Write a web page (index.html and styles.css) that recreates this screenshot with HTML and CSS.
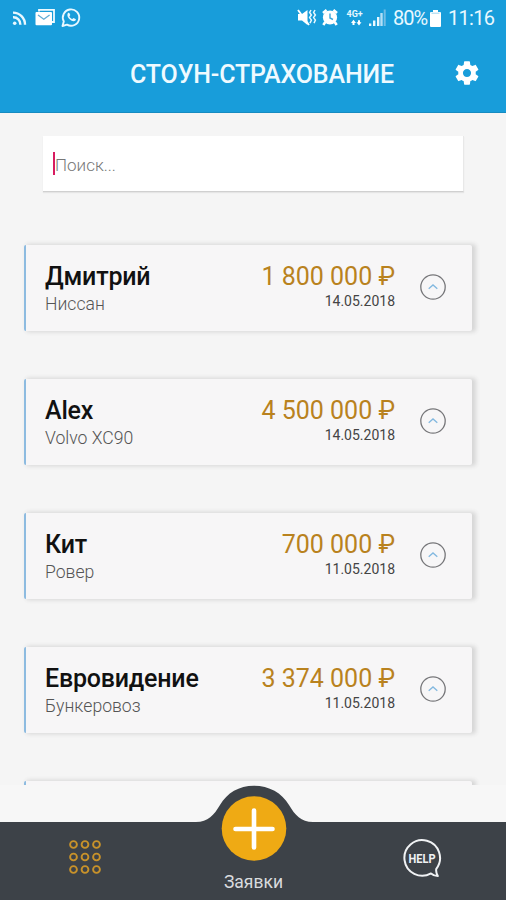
FILE: index.html
```html
<!DOCTYPE html>
<html lang="ru">
<head>
<meta charset="utf-8">
<title>Стоун-Страхование</title>
<link rel="stylesheet" href="styles.css">
</head>
<body>
<header class="header">
  <div class="status">
    <svg class="status-left" width="90" height="36" viewBox="0 0 90 36" fill="none">
      <g stroke="#e8f8ff" stroke-width="2.4">
        <circle cx="14.7" cy="23.3" r="1.8" fill="#e8f8ff" stroke="none"/>
        <path d="M13 17.3a7 7 0 0 1 7.4 7.4M13 12.6a12 12 0 0 1 12 12.1"/>
      </g>
      <path d="M39 11.5V9.8h15V22h-2.5" stroke="#eefaff" stroke-width="1.8"/>
      <rect x="35.5" y="12" width="16.5" height="13.2" rx="1" fill="#fff"/>
      <path d="M38 15l5.8 4.3 5.8-4.3" stroke="#5facd5" stroke-width="1.3"/>
      <path d="M62.5 26l1.3-4.6A8.2 8.2 0 1 1 67 24.7z" stroke="#e8f8ff" stroke-width="1.9" stroke-linejoin="round"/>
      <path d="M67.8 13.2c.6-.7 1.4-.6 1.7.1l.8 1.8-.9 1.3c.7 1.3 1.6 2.1 2.9 2.7l1.2-1.2 2 1c.6.3.5 1.2-.1 1.7-2.8 2.4-9.8-3.3-7.6-7.4z" fill="#e8f8ff"/>
    </svg>
    <div class="status-right">
      <svg width="92" height="36" viewBox="296 0 92 36" fill="none">
        <path d="M298 14h4l5.5-4v15l-5.5-4.4h-4z" fill="#fff"/>
        <path d="M298 10l11 15" stroke="#fff" stroke-width="1.9"/>
        <path d="M311 10l-1.4 2.5 1.8 2.5-1.8 2.6 1.8 2.5-1.4 3M315 10l-1.4 2.5 1.8 2.5-1.8 2.6 1.8 2.5-1.4 3" stroke="#e8f8ff" stroke-width="1.5"/>
        <circle cx="330" cy="17.5" r="7.1" fill="#fff"/>
        <path d="M323 13l3.6-3M337 13l-3.6-3M325.3 22l-2 3M334.7 22l2 3" stroke="#fff" stroke-width="2.6"/>
        <path d="M330 13.5V18l3 1.5" stroke="#3ba7dc" stroke-width="1.4"/>
        <text x="346.5" y="17" class="network">4G+</text>
        <path d="M353.5 19.8l2.5 3.2h-1.5v2h-2v-2H351zM359 25.5l-2.5-3.2h1.5v-2h2v2h1.5z" fill="#fff"/>
        <path d="M369 23.5h2.3V26H369zM373 20.5h2.4V26H373zM377 17h2.4v9H377z" fill="#e8f8ff"/>
        <path d="M380.3 13h2.4v13h-2.4z" fill="#b4dff5"/>
        <path d="M383.7 9.5h2V26h-2z" fill="#70bde5"/>
      </svg>
      <span class="percent">80%</span>
      <svg class="battery" width="11" height="17" viewBox="0 0 11 17"><path d="M3 0h5v2h2q1 0 1 1v13q0 1-1 1H1q-1 0-1-1V3q0-1 1-1h2z" fill="#fff"/><path d="M1.5 3.2h8" stroke="#a0d4ee"/></svg>
      <span class="clock">11:16</span>
    </div>
  </div>
  <div class="toolbar">
    <h1 class="title">СТОУН-СТРАХОВАНИЕ</h1>
    <svg class="gear" width="28" height="28" viewBox="0 0 24 24" fill="#fff"><path d="M19.43 12.98c.04-.32.07-.64.07-.98s-.03-.66-.07-.98l2.11-1.65c.19-.15.24-.42.12-.64l-2-3.46c-.12-.22-.39-.3-.61-.22l-2.49 1c-.52-.4-1.08-.73-1.69-.98l-.38-2.65A.488.488 0 0 0 14 2h-4c-.25 0-.46.18-.49.42l-.38 2.65c-.61.25-1.17.59-1.69.98l-2.49-1c-.23-.09-.49 0-.61.22l-2 3.46c-.13.22-.07.49.12.64l2.11 1.65c-.04.32-.07.65-.07.98s.03.66.07.98l-2.11 1.65c-.19.15-.24.42-.12.64l2 3.46c.12.22.39.3.61.22l2.49-1c.52.4 1.08.73 1.69.98l.38 2.65c.03.24.24.42.49.42h4c.25 0 .46-.18.49-.42l.38-2.65c.61-.25 1.17-.59 1.69-.98l2.49 1c.23.09.49 0 .61-.22l2-3.46c.12-.22.07-.49-.12-.64l-2.11-1.65zM12 15.5c-1.93 0-3.5-1.57-3.5-3.5s1.57-3.5 3.5-3.5 3.5 1.57 3.5 3.5-1.57 3.5-3.5 3.5z"/></svg>
  </div>
</header>

<main class="content">
  <div class="search"><span class="caret"></span><span class="placeholder">Поиск...</span></div>
  <div class="list">
    <article class="card">
      <div class="who"><div class="name">Дмитрий</div><div class="car">Ниссан</div></div>
      <div class="sum"><div class="price">1 800 000 ₽</div><div class="date">14.05.2018</div></div>
      <svg class="toggle" width="28" height="28" viewBox="0 0 28 28" fill="none"><circle cx="14" cy="14" r="12.2" stroke="#77777a" stroke-width="1.3"/><path d="M9.7 15.7l4.3-3.8 4.3 3.8" stroke="#82b8df" stroke-width="1.3"/></svg>
    </article>
    <article class="card">
      <div class="who"><div class="name">Alex</div><div class="car">Volvo XC90</div></div>
      <div class="sum"><div class="price">4 500 000 ₽</div><div class="date">14.05.2018</div></div>
      <svg class="toggle" width="28" height="28" viewBox="0 0 28 28" fill="none"><circle cx="14" cy="14" r="12.2" stroke="#77777a" stroke-width="1.3"/><path d="M9.7 15.7l4.3-3.8 4.3 3.8" stroke="#82b8df" stroke-width="1.3"/></svg>
    </article>
    <article class="card">
      <div class="who"><div class="name">Кит</div><div class="car">Ровер</div></div>
      <div class="sum"><div class="price">700 000 ₽</div><div class="date">11.05.2018</div></div>
      <svg class="toggle" width="28" height="28" viewBox="0 0 28 28" fill="none"><circle cx="14" cy="14" r="12.2" stroke="#77777a" stroke-width="1.3"/><path d="M9.7 15.7l4.3-3.8 4.3 3.8" stroke="#82b8df" stroke-width="1.3"/></svg>
    </article>
    <article class="card">
      <div class="who"><div class="name">Евровидение</div><div class="car">Бункеровоз</div></div>
      <div class="sum"><div class="price">3 374 000 ₽</div><div class="date">11.05.2018</div></div>
      <svg class="toggle" width="28" height="28" viewBox="0 0 28 28" fill="none"><circle cx="14" cy="14" r="12.2" stroke="#77777a" stroke-width="1.3"/><path d="M9.7 15.7l4.3-3.8 4.3 3.8" stroke="#82b8df" stroke-width="1.3"/></svg>
    </article>
    <article class="card"></article>
  </div>
</main>

<nav class="nav">
  <svg class="nav-shape" width="506" height="115" viewBox="0 0 506 115"><path d="M0 37H196C208 37 214 30 220 20C227 8 239 .8 254 .8S282 8 289 20C295 30 301 37 313 37H506V115H0z" fill="#3d4248"/></svg>
  <div class="nav-item">
    <svg width="34" height="36" viewBox="0 0 34 36" fill="none" stroke="#c8922a" stroke-width="1.9">
      <circle cx="5.5" cy="5.5" r="3.4"/><circle cx="17" cy="5.5" r="3.4"/><circle cx="28.5" cy="5.5" r="3.4"/>
      <circle cx="5.5" cy="18" r="3.4"/><circle cx="17" cy="18" r="3.4"/><circle cx="28.5" cy="18" r="3.4"/>
      <circle cx="5.5" cy="30.5" r="3.4"/><circle cx="17" cy="30.5" r="3.4"/><circle cx="28.5" cy="30.5" r="3.4"/>
    </svg>
  </div>
  <div class="nav-main">
    <svg width="66" height="66" viewBox="0 0 66 66"><circle cx="33" cy="32.5" r="32.3" fill="#efaa14"/><path d="M33 14.5v37M14.5 33h37" stroke="#fff" stroke-width="4.6" stroke-linecap="round"/></svg>
    <span class="nav-label">Заявки</span>
  </div>
  <div class="nav-item">
    <svg width="40" height="40" viewBox="0 0 40 40"><path d="M29 34.4A17.8 17.8 0 1 1 34.3 29.8Q33.6 33 35.8 37Q32 37 29 34.4z" fill="none" stroke="#f0f2f4" stroke-width="2" stroke-linejoin="round"/><text x="20" y="23.8" class="help" textLength="27" lengthAdjust="spacingAndGlyphs">HELP</text></svg>
  </div>
</nav>
</body>
</html>
```
FILE: styles.css
```css
* { box-sizing: border-box; }

body {
  margin: 0;
  width: 506px;
  height: 900px;
  overflow: hidden;
  display: flex;
  flex-direction: column;
  background: #f5f5f5;
  font-family: Roboto, "Liberation Sans", sans-serif;
}

svg { display: block; flex: none; }

.header {
  height: 113px;
  flex: none;
  background: #189dda;
  border-bottom: 1px solid #168bc1;
  color: #fff;
}

.status {
  height: 36px;
  display: flex;
  justify-content: space-between;
}

.status-right {
  display: flex;
  align-items: center;
  padding-right: 12px;
  font-size: 20px;
  color: #e8f8ff;
}

.network { font-size: 9px; font-weight: 700; fill: #e8f8ff; }
.percent { width: 33px; margin-left: 5px; letter-spacing: -1px; white-space: nowrap; }
.battery { margin-left: 4px; }
.clock { width: 46px; margin-left: 7px; letter-spacing: -0.7px; }

.toolbar {
  height: 76px;
  display: flex;
  align-items: center;
  padding: 0 25px 0 130px;
  justify-content: space-between;
}

.title {
  margin: 2px 0 0;
  font-size: 25px;
  line-height: 30px;
  font-weight: 500;
  letter-spacing: -0.15px;
  color: #effaff;
  white-space: nowrap;
}

.gear { margin-top: -2px; }

.content {
  height: 672px;
  flex: none;
  overflow: hidden;
  padding: 23px 0 0;
}

.search {
  width: 421px;
  height: 56px;
  margin-left: 43px;
  padding-left: 10px;
  display: flex;
  align-items: center;
  background: #fff;
  border-right: 1px solid #e8e8e8;
  border-bottom: 1px solid #d0d0d0;
  box-shadow: 0 1px 1px #e5e5e5;
}

.caret { width: 2px; height: 23px; background: #d81b60; }

.placeholder {
  margin-top: 3px;
  font-size: 17px;
  font-weight: 300;
  color: #777;
}

.list {
  display: flex;
  flex-direction: column;
  gap: 48px;
  padding: 53px 0 0 24px;
}

.card {
  width: 448px;
  height: 86px;
  flex: none;
  display: flex;
  padding-left: 21px;
  background: #f7f6f7;
  border-left: 2px solid #8dbbe0;
  border-radius: 2px;
  box-shadow: 3px 0 4px 1px #d6d6d6;
}

.who { flex: 1; margin-left: -2px; padding-top: 17px; }
.name { font-size: 25px; line-height: 30px; font-weight: 500; letter-spacing: -0.2px; color: #111; white-space: nowrap; }
.car { margin-top: 2px; font-size: 17.6px; line-height: 20px; font-weight: 300; color: #555; }

.sum { padding-top: 17px; text-align: right; }
.price { font-size: 25px; line-height: 30px; color: #b9821e; white-space: nowrap; }
.date { font-size: 14px; line-height: 18px; color: #444; }

.toggle { margin: 28px 25px 0 24px; }

.nav {
  position: relative;
  height: 115px;
  flex: none;
  display: flex;
  justify-content: space-between;
  padding: 0 64px 0 68px;
  background: #f7f7f7;
}

.nav-shape { position: absolute; left: 0; top: 0; }

.nav-item { position: relative; padding-top: 54px; }

.nav-main {
  position: relative;
  display: flex;
  flex-direction: column;
  align-items: center;
  margin-left: 3px;
  padding-top: 11px;
}

.nav-label {
  margin-top: 10px;
  font-size: 17.5px;
  line-height: 21px;
  color: #d9dbde;
}

.help { font-size: 12.5px; font-weight: 700; fill: #f0f2f4; text-anchor: middle; }
```
